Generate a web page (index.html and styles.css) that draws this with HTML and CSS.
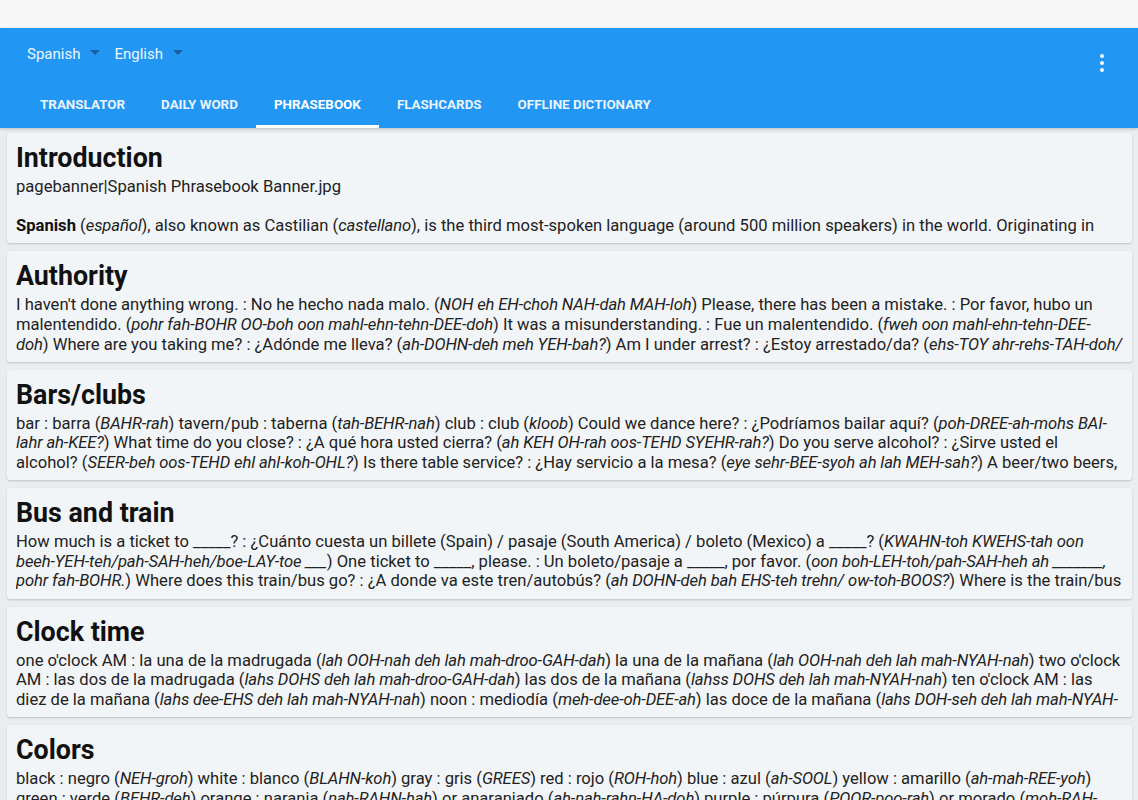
FILE: index.html
```html
<!DOCTYPE html>
<html lang="en">
<head>
<meta charset="utf-8">
<title>Phrasebook</title>
<link rel="stylesheet" href="styles.css">
</head>
<body>
<div class="statusbar"></div>
<header class="appbar">
  <div class="langrow">
    <div class="lang">Spanish<span class="caret"></span></div>
    <div class="lang">English<span class="caret"></span></div>
    <div class="spacer"></div>
    <div class="overflow"><span></span><span></span><span></span></div>
  </div>
  <nav class="tabs">
    <div class="tab">TRANSLATOR</div>
    <div class="tab">DAILY WORD</div>
    <div class="tab active">PHRASEBOOK</div>
    <div class="tab">FLASHCARDS</div>
    <div class="tab">OFFLINE DICTIONARY</div>
  </nav>
</header>
<main class="content">
  <section class="card">
    <h2 class="title">Introduction</h2>
    <p class="body">pagebanner|Spanish Phrasebook Banner.jpg<br><br><b>Spanish</b> (<i>español</i>), also known as Castilian (<i>castellano</i>), is the third most-spoken language (around 500 million speakers) in the world. Originating in Spain, it is the official language of most of the countries in Central and South America.</p>
  </section>
  <section class="card">
    <h2 class="title">Authority</h2>
    <p class="body">I haven't done anything wrong. : No he hecho nada malo. (<i>NOH eh EH-choh NAH-dah MAH-loh</i>) Please, there has been a mistake. : Por favor, hubo un malentendido. (<i>pohr fah-BOHR OO-boh oon mahl-ehn-tehn-DEE-doh</i>) It was a misunderstanding. : Fue un malentendido. (<i>fweh oon mahl-ehn-tehn-DEE-doh</i>) Where are you taking me? : ¿Adónde me lleva? (<i>ah-DOHN-deh meh YEH-bah?</i>) Am I under arrest? : ¿Estoy arrestado/da? (<i>ehs-TOY ahr-rehs-TAH-doh/<wbr>dah?</i>) I am an American citizen. : Soy ciudadano americano.</p>
  </section>
  <section class="card">
    <h2 class="title">Bars/clubs</h2>
    <p class="body">bar : barra (<i>BAHR-rah</i>) tavern/pub : taberna (<i>tah-BEHR-nah</i>) club : club (<i>kloob</i>) Could we dance here? : ¿Podríamos bailar aquí? (<i>poh-DREE-ah-mohs BAI-lahr ah-KEE?</i>) What time do you close? : ¿A qué hora usted cierra? (<i>ah KEH OH-rah oos-TEHD SYEHR-rah?</i>) Do you serve alcohol? : ¿Sirve usted el alcohol? (<i>SEER-beh oos-TEHD ehl ahl-koh-OHL?</i>) Is there table service? : ¿Hay servicio a la mesa? (<i>eye sehr-BEE-syoh ah lah MEH-sah?</i>) A beer/two beers, please. : Una cerveza/dos cervezas, por favor.</p>
  </section>
  <section class="card">
    <h2 class="title">Bus and train</h2>
    <p class="body">How much is a ticket to _____? : ¿Cuánto cuesta un billete (Spain) / pasaje (South America) / boleto (Mexico) a _____? (<i>KWAHN-toh KWEHS-tah oon beeh-YEH-teh/pah-SAH-heh/boe-LAY-toe ___</i>) One ticket to _____, please. : Un boleto/pasaje a _____, por favor. (<i>oon boh-LEH-toh/pah-SAH-heh ah _______, pohr fah-BOHR.</i>) Where does this train/bus go? : ¿A donde va este tren/autobús? (<i>ah DOHN-deh bah EHS-teh trehn/ ow-toh-BOOS?</i>) Where is the train/<wbr>bus to _____? : ¿Dónde está el tren/autobús hacia _____?</p>
  </section>
  <section class="card">
    <h2 class="title">Clock time</h2>
    <p class="body">one o'clock AM : la una de la madrugada (<i>lah OOH-nah deh lah mah-droo-GAH-dah</i>) la una de la mañana (<i>lah OOH-nah deh lah mah-NYAH-nah</i>) two o'clock AM : las dos de la madrugada (<i>lahs DOHS deh lah mah-droo-GAH-dah</i>) las dos de la mañana (<i>lahss DOHS deh lah mah-NYAH-nah</i>) ten o'clock AM : las diez de la mañana (<i>lahs dee-EHS deh lah mah-NYAH-nah</i>) noon : mediodía (<i>meh-dee-oh-DEE-ah</i>) las doce de la mañana (<i>lahs DOH-seh deh lah mah-NYAH-nah</i>) one o'clock PM : la una de la tarde</p>
  </section>
  <section class="card">
    <h2 class="title">Colors</h2>
    <p class="body">black : negro (<i>NEH-groh</i>) white : blanco (<i>BLAHN-koh</i>) gray : gris (<i>GREES</i>) red : rojo (<i>ROH-hoh</i>) blue : azul (<i>ah-SOOL</i>) yellow : amarillo (<i>ah-mah-REE-yoh</i>) green : verde (<i>BEHR-deh</i>) orange : naranja (<i>nah-RAHN-hah</i>) or anaranjado (<i>ah-nah-rahn-HA-doh</i>) purple : púrpura (<i>POOR-poo-rah</i>) or morado (<i>moh-RAH-doh</i>) brown : marrón (<i>mah-RROHN</i>) or café (<i>kah-FEH</i>)</p>
  </section>
</main>
</body>
</html>
```
FILE: styles.css
```css
* { box-sizing: border-box; }
html, body {
  margin: 0;
  padding: 0;
  height: 800px;
  overflow: hidden;
}
body {
  background: #e9edef;
  font-family: Roboto, "Liberation Sans", Arial, sans-serif;
  color: #212121;
}
.statusbar {
  height: 28px;
  background: #f7f7f7;
}
.appbar {
  background: #2196f3;
  color: #eef6fe;
  box-shadow: 0 1px 3px rgba(0,0,0,0.2);
}
.langrow {
  height: 52px;
  display: flex;
  align-items: center;
  padding-left: 27px;
  padding-right: 34px;
}
.lang {
  font-size: 15px;
  display: flex;
  align-items: center;
  margin-right: 14px;
  margin-top: -1px;
}
.caret {
  display: inline-block;
  width: 0;
  height: 0;
  margin-left: 10px;
  margin-top: -3px;
  border-left: 5px solid transparent;
  border-right: 5px solid transparent;
  border-top: 5px solid #1b5ea3;
}
.spacer { flex: 1; }
.overflow {
  display: flex;
  flex-direction: column;
  gap: 2.5px;
  margin-top: 18px;
}
.overflow span {
  width: 4.5px;
  height: 4.5px;
  border-radius: 50%;
  background: #f4faff;
}
.tabs {
  height: 48px;
  display: flex;
  padding-left: 22px;
}
.tab {
  padding: 4px 18px 0 18px;
  font-size: 13.4px;
  font-weight: 700;
  display: flex;
  align-items: center;
  color: #eaf4fe;
  border-bottom: 3px solid transparent;
}
.tab.active {
  border-bottom-color: #ffffff;
  color: #ffffff;
}
.content {
  padding: 5px 6px 0 7px;
  display: flex;
  flex-direction: column;
  gap: 8px;
}
.card {
  background: #f2f5f7;
  border-radius: 3px;
  box-shadow: 0 1px 2px rgba(0,0,0,0.18);
  padding: 10px 9px 7.6px 9px;
}
.title {
  margin: 0 0 4px 0;
  font-size: 26.8px;
  line-height: 30px;
  font-weight: 700;
  color: #111111;
}
.body {
  margin: 0;
  font-size: 16.6px;
  line-height: 19.6px;
  height: 58.8px;
  overflow: hidden;
  color: #222222;
}
.body i { letter-spacing: -0.12px; }
.body b { color: #111; }
```
